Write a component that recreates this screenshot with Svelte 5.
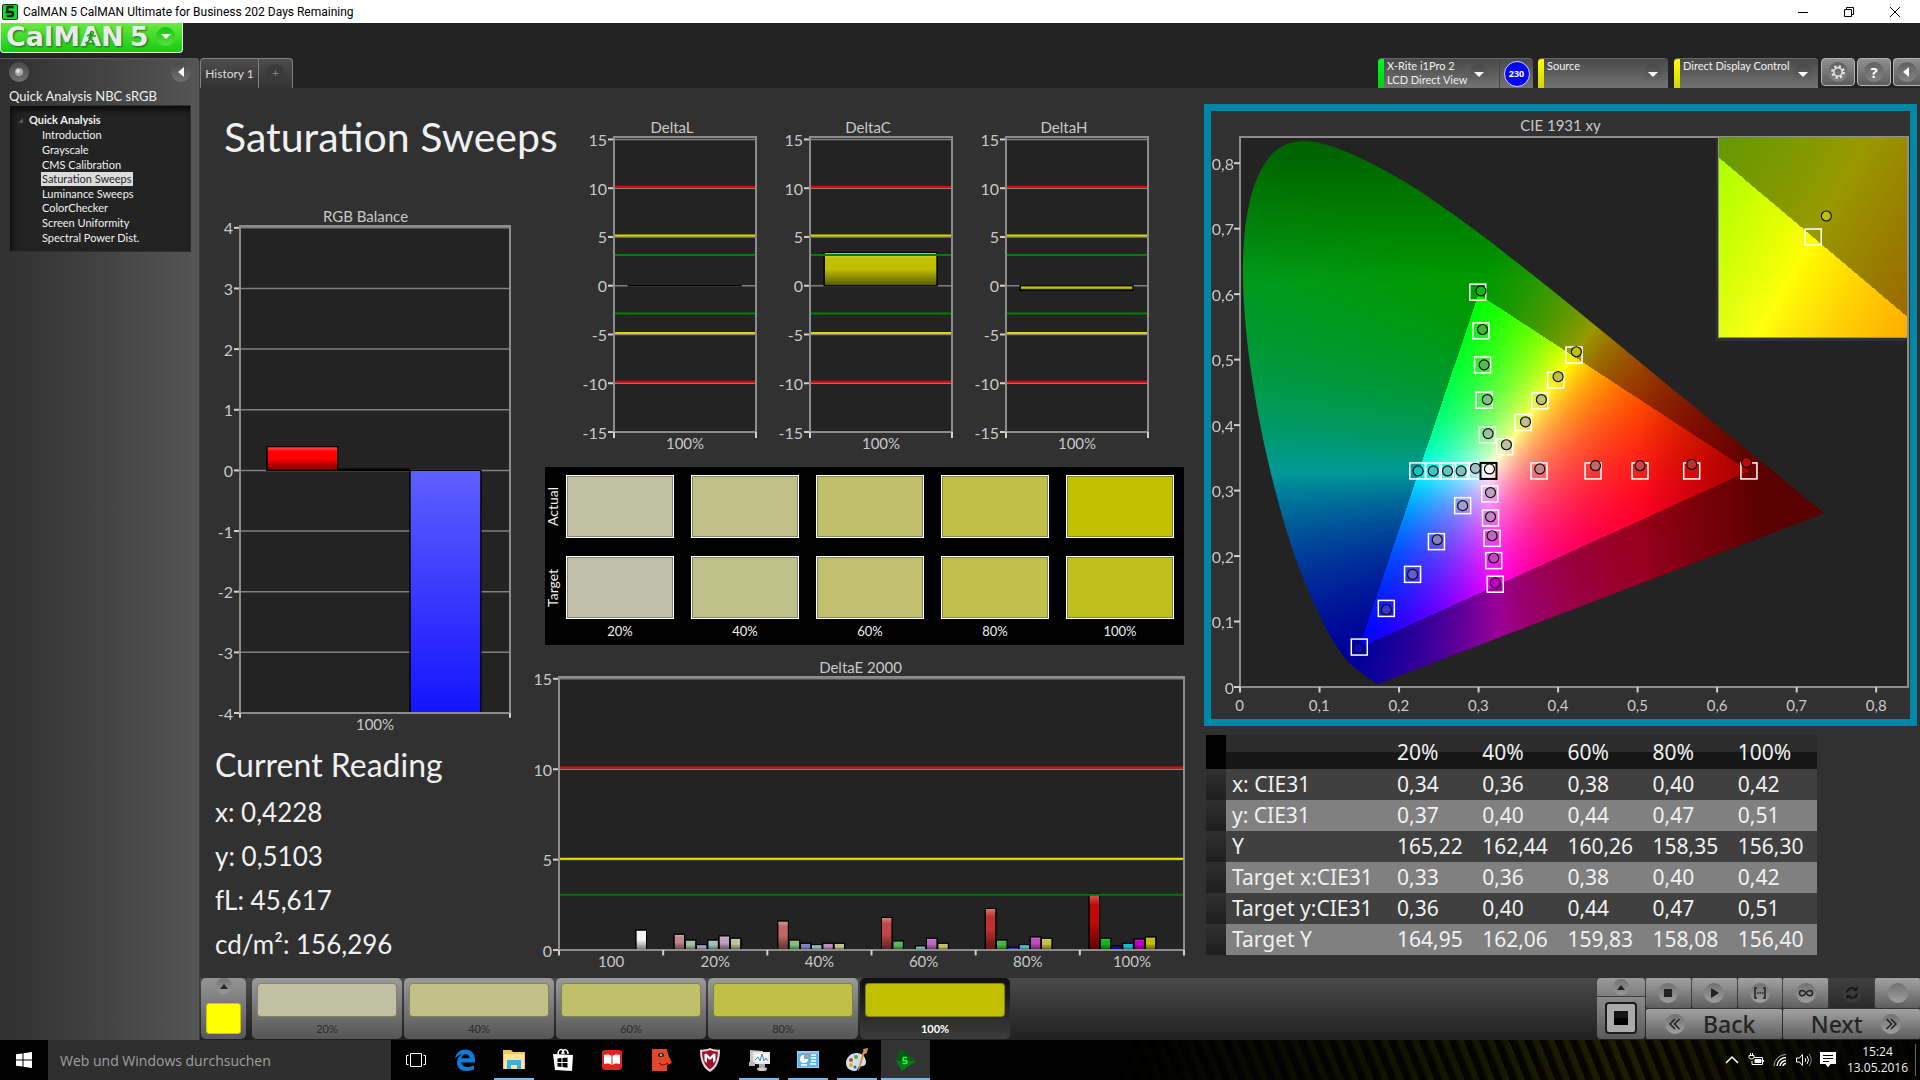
<script>
  import { onMount } from 'svelte';

  const tree = ['Introduction', 'Grayscale', 'CMS Calibration', 'Saturation Sweeps', 'Luminance Sweeps', 'ColorChecker', 'Screen Uniformity', 'Spectral Power Dist.'];

  const palette = {
    red: ['#c08888', '#c06868', '#c04848', '#c03030', '#c00808'],
    green: ['#a0c0a0', '#80c080', '#58b858', '#40b840', '#10b810'],
    blue: ['#a0a0c8', '#8080c8', '#6060c8', '#3838c8', '#0808c8'],
    cyan: ['#a0c0c0', '#80c0c0', '#70c0c0', '#40c0c8', '#10c0c8'],
    magenta: ['#c0a0c0', '#c088c0', '#c068c0', '#c048c0', '#c000c0'],
    yellow: ['#c0c0a4', '#c0c088', '#c0c06c', '#c0c048', '#c0c000']
  };
  const levels = ['20%', '40%', '60%', '80%', '100%'];
  const hues = ['red', 'green', 'blue', 'cyan', 'magenta', 'yellow'];

  // Limits of the delta charts: value and line colour
  const limits = [[10, '#f00000'], [5, '#d8d800'], [3, '#008000'], [-3, '#008000'], [-5, '#d8d800'], [-10, '#f00000']];
  const limitShift = 0.15;
  const deltaTop = 15.25;

  const deltaTicks = [15, 10, 5, 0, -5, -10, -15];
  const deltaCharts = [
    { title: 'DeltaL', value: 0.02 },
    { title: 'DeltaC', value: 3.4 },
    { title: 'DeltaH', value: -0.45 }
  ];
  const rgbTicks = [4, 3, 2, 1, 0, -1, -2, -3, -4];
  const rgbBars = [
    { x: 10, value: 0.39, color: '#ff0000' },
    { x: 36.5, value: 0.02, color: '#00ff00' },
    { x: 63, value: -4, color: '#1414ff' }
  ];

  const errors = [
    [0.87, 0.55, 0.3, 0.55, 0.78, 0.65],
    [1.6, 0.55, 0.37, 0.3, 0.37, 0.37],
    [1.8, 0.5, 0, 0.23, 0.65, 0.37],
    [2.3, 0.55, 0.15, 0.3, 0.72, 0.65],
    [3.1, 0.65, 0.22, 0.37, 0.6, 0.72]
  ];
  const errorBars = [{ x: 12.3, value: 1.1, color: '#f4f4f4' }];
  errors.forEach((row, i) =>
    row.forEach((value, k) => {
      if (value) errorBars.push({ x: 18.4 + i * 16.6 + k * 1.8, value, color: palette[hues[k]][i] });
    })
  );
  const errorLimits = [[10.1, '#f00000'], [5.05, '#e0e000'], [3.05, '#007800']];

  const swatchActual = ['#c0c0a4', '#c0c088', '#c0c06c', '#c0c048', '#c0c000'];
  const swatchTarget = ['#c0c0a8', '#c0c08a', '#c0c06e', '#c0c04c', '#c0c01c'];

  const readings = ['x: 0,4228', 'y: 0,5103', 'fL: 45,617', 'cd/m²: 156,296'];

  const rows = [
    ['x: CIE31', '0,34', '0,36', '0,38', '0,40', '0,42'],
    ['y: CIE31', '0,37', '0,40', '0,44', '0,47', '0,51'],
    ['Y', '165,22', '162,44', '160,26', '158,35', '156,30'],
    ['Target x:CIE31', '0,33', '0,36', '0,38', '0,40', '0,42'],
    ['Target y:CIE31', '0,36', '0,40', '0,44', '0,47', '0,51'],
    ['Target Y', '164,95', '162,06', '159,83', '158,08', '156,40']
  ];

  // Chromaticities per hue, 20% to 100%: [target x, target y, measured x, measured y]
  const points = {
    green: [[.311, .385, .312, .387], [.307, .438, .311, .439], [.305, .492, .307, .492], [.303, .544, .305, .546], [.299, .603, .303, .605]],
    yellow: [[.333, .367, .335, .37], [.356, .404, .359, .405], [.377, .437, .379, .439], [.397, .469, .4, .474], [.42, .507, .423, .512]],
    red: [[.376, .33, .377, .333], [.444, .33, .447, .338], [.503, .33, .503, .338], [.568, .33, .568, .34], [.64, .33, .637, .343]],
    cyan: [[.296, .33, .296, .334], [.278, .33, .278, .33], [.261, .33, .261, .33], [.243, .33, .243, .33], [.2236, .33, .224, .33]],
    magenta: [[.314, .295, .315, .297], [.315, .258, .315, .26], [.317, .227, .317, .231], [.319, .193, .319, .197], [.321, .157, .321, .159]],
    blue: [[.28, .277, .28, .277], [.247, .222, .248, .225], [.217, .172, .217, .172], [.184, .12, .184, .118], [.15, .061, .149, .059]]
  };
  const marks = Object.entries(points).flatMap(([hue, list]) => list.map((p, i) => ({ p, color: palette[hue][i] })));
  const span = 0.84;
  const px = (x) => `${(x / span) * 100}%`;
  const py = (y) => `${(1 - y / span) * 100}%`;
  const cieTicks = [0, 0.1, 0.2, 0.3, 0.4, 0.5, 0.6, 0.7, 0.8];
  const comma = (v) => String(v).replace('.', ',');

  const locus = [[.1741, .005], [.1714, .0051], [.1644, .0109], [.1566, .0177], [.144, .0297], [.1355, .0399], [.1241, .0578], [.1096, .0868], [.0913, .1327], [.0687, .2007], [.0454, .295], [.0235, .4127], [.0082, .5384], [.0039, .6548], [.0139, .7502], [.0389, .812], [.0743, .8338], [.1142, .8262], [.1547, .8059], [.1929, .7816], [.2296, .7543], [.3016, .6923], [.3731, .6245], [.4441, .5547], [.5125, .4866], [.5752, .4242], [.627, .3725], [.6658, .334], [.6915, .3083], [.719, .2809], [.7347, .2653]];

  let mainCanvas;
  let insetCanvas;

  function colorAt(x, y) {
    const X = x / y, Z = (1 - x - y) / y;
    const lin = [
      3.2406 * X - 1.5372 - 0.4986 * Z,
      -0.9689 * X + 1.8758 + 0.0415 * Z,
      0.0557 * X - 0.204 + 1.057 * Z
    ];
    const inside = Math.min(...lin) >= 0;
    const max = Math.max(...lin);
    let f = inside ? 1 : 0.6;
    if (x > 0.5) f *= 1 - 0.42 * Math.min(1, (x - 0.5) / 0.16);
    if (y > 0.62) f *= 1 - 0.35 * Math.min(1, (y - 0.62) / 0.2);
    return lin.map((c) => 255 * f * Math.pow(Math.max(0, c) / max, 1.15));
  }

  function paint(canvas, x0, y0, w, h) {
    const ctx = canvas.getContext('2d');
    const img = ctx.createImageData(canvas.width, canvas.height);
    for (let j = 0; j < canvas.height; j++)
      for (let i = 0; i < canvas.width; i++) {
        const x = x0 + ((i + 0.5) / canvas.width) * w;
        const y = y0 + h - ((j + 0.5) / canvas.height) * h;
        const [r, g, b] = colorAt(x, y);
        const k = (j * canvas.width + i) * 4;
        img.data[k] = r;
        img.data[k + 1] = g;
        img.data[k + 2] = b;
        img.data[k + 3] = 255;
      }
    ctx.putImageData(img, 0, 0);
    return ctx;
  }

  onMount(() => {
    const ctx = paint(mainCanvas, 0, 0, span, span);
    const path = locus.map(([x, y]) => [(x / span) * mainCanvas.width, (1 - y / span) * mainCanvas.height]);
    const last = path.length - 1;
    ctx.globalCompositeOperation = 'destination-in';
    ctx.beginPath();
    ctx.moveTo(...path[0]);
    // Catmull-Rom spline through the spectral locus
    for (let i = 0; i < last; i++) {
      const a = path[Math.max(i - 1, 0)];
      const b = path[i];
      const c = path[i + 1];
      const d = path[Math.min(i + 2, last)];
      ctx.bezierCurveTo(b[0] + (c[0] - a[0]) / 6, b[1] + (c[1] - a[1]) / 6, c[0] - (d[0] - b[0]) / 6, c[1] - (d[1] - b[1]) / 6, c[0], c[1]);
    }
    ctx.closePath();
    ctx.fill();
    paint(insetCanvas, 0.3943, 0.4803, 0.05, 0.05);
  });
</script>

{#snippet yAxis(ticks, lo, hi)}
  {#each ticks as t}
    {@const y = `${((hi - t) / (hi - lo)) * 100}%`}
    <line x1="0" x2="100%" y1={y} y2={y} class="grid" />
    <line x1="-6" x2="0" y1={y} y2={y} class="tick" />
    <text x="-7" y={y} class="ylab">{t}</text>
  {/each}
{/snippet}

{#snippet bar(b, w, lo, hi)}
  {@const top = ((hi - Math.max(b.value, 0)) / (hi - lo)) * 100}
  {@const h = (Math.abs(b.value) / (hi - lo)) * 100}
  <rect x="{b.x}%" y="{top}%" width="{w}%" height="{h}%" fill={b.color} stroke="#000" />
  <rect x="{b.x}%" y="{top}%" width="{w}%" height="{h}%" fill={b.value < -1 ? 'url(#fall)' : 'url(#gloss)'} stroke="#000" />
{/snippet}

<div class="desktop">
  <header class="titlebar">
    <svg width="16" height="16" viewBox="0 0 16 16"><rect width="16" height="16" rx="2" fill="#083808" /><rect x="1" y="1" width="14" height="14" rx="1" fill="#12d830" /><path d="M11.5 3H5.5L5 8h4.500q1.500 0 1.500 2t-2 2H4.500" fill="none" stroke="#021" stroke-width="2.400" /></svg>
    <span class="caption">CalMAN 5 CalMAN Ultimate for Business 202 Days Remaining</span>
    <div class="winbtns">
      <button aria-label="Minimize"><svg width="10" height="10"><path d="M0 5.500h10" stroke="#000" /></svg></button>
      <button aria-label="Restore"><svg width="10" height="10" fill="none" stroke="#000"><path d="M.5 2.500h7v7h-7zM2.500 2.500v-2h7v7h-2" /></svg></button>
      <button aria-label="Close"><svg width="10" height="10" stroke="#000"><path d="M0 0l10 10M10 0L0 10" /></svg></button>
    </div>
  </header>

  <div class="shell">
    <div class="left">
      <button class="logo">
        <span class="brand">CalM<span class="a">A<svg width="14" height="16" viewBox="0 0 14 16"><path d="M8 1.500a1.500 1.500 0 1 0 .1 0M3 6l4-2 2 2 3 0M7 5L6 9l3 2v4M6 9l-2 3-3 1" fill="none" stroke="#1c9c1c" stroke-width="1.600" /></svg></span>N</span><span class="brand">5</span>
        <span class="logo-drop"><svg width="10" height="5"><path d="M0 0h10L5 5z" fill="#fff" /></svg></span>
      </button>
      <aside class="sidebar">
        <div class="side-top">
          <button class="round" aria-label="Pin"><svg width="20" height="20"><circle cx="10" cy="10" r="4" fill="#a8a8a8" /><circle cx="9" cy="9" r="2" fill="#ddd" /></svg></button>
          <button class="round" aria-label="Collapse"><svg width="20" height="20"><path d="M13 5v10l-6-5z" fill="#fff" /></svg></button>
        </div>
        <div class="side-title">Quick Analysis NBC sRGB</div>
        <nav class="tree">
          <div class="root"><svg width="5" height="5"><path d="M5 0v5H0z" fill="#555" /></svg>Quick Analysis</div>
          <ul>
            {#each tree as item}
              <li><a href="#page" class:current={item === 'Saturation Sweeps'}>{item}</a></li>
            {/each}
          </ul>
        </nav>
      </aside>
    </div>

    <div class="right">
      <div class="toolbar">
        <button class="tab">History 1</button>
        <button class="tab plus" aria-label="New history"><span>+</span></button>
        <div class="spacer"></div>
        <div class="device meter">
          <i class="stripe green"></i>
          <button class="device-btn"><span>X-Rite i1Pro 2<br />LCD Direct View</span><span class="drop"><svg width="10" height="5"><path d="M0 0h10L5 5z" fill="#fff" /></svg></span></button>
          <div class="badge-cell"><span class="badge">230</span></div>
        </div>
        <div class="device source">
          <i class="stripe"></i>
          <button class="device-btn"><span>Source</span><span class="drop"><svg width="10" height="5"><path d="M0 0h10L5 5z" fill="#fff" /></svg></span></button>
        </div>
        <div class="device display">
          <i class="stripe"></i>
          <button class="device-btn"><span>Direct Display Control</span><span class="drop"><svg width="10" height="5"><path d="M0 0h10L5 5z" fill="#fff" /></svg></span></button>
        </div>
        <div class="tools">
          <button class="tool" aria-label="Settings"><span><svg width="16" height="16" viewBox="0 0 16 16"><circle cx="8" cy="8" r="5.800" fill="none" stroke="#e4e4e4" stroke-width="2.200" stroke-dasharray="2.300 2.255" /><circle cx="8" cy="8" r="4.200" fill="none" stroke="#e4e4e4" stroke-width="1.600" /></svg></span></button>
          <button class="tool" aria-label="Help"><span>?</span></button>
          <button class="tool cut" aria-label="Collapse toolbar"><span><svg width="16" height="16"><path d="M10 3v10L4 8z" fill="#fff" /></svg></span></button>
        </div>
      </div>

      <main class="page" id="page">
        <section class="col-a">
          <h1>Saturation Sweeps</h1>
          <div class="chart rgb">
            <h3>RGB Balance</h3>
            <svg class="plot">
              <defs>
                <linearGradient id="gloss" x1="0" x2="0" y1="0" y2="1">
                  <stop offset="0" stop-color="#fff" stop-opacity=".35" />
                  <stop offset=".2" stop-color="#fff" stop-opacity="0" />
                  <stop offset=".5" stop-opacity="0" />
                  <stop offset="1" stop-opacity=".55" />
                </linearGradient>
                <linearGradient id="fall" x1="0" x2="0" y1="0" y2="1">
                  <stop offset="0" stop-color="#fff" stop-opacity=".32" />
                  <stop offset="1" stop-color="#fff" stop-opacity="0" />
                </linearGradient>
              </defs>
              <rect width="100%" height="100%" class="face" />
              {@render yAxis(rgbTicks, -4, 4.03)}
              {#each rgbBars as b}{@render bar(b, 26.2, -4, 4.03)}{/each}
              <rect width="100%" height="100%" class="frame" />
              <line x1="0" x2="0" y1="100%" y2="101%" class="tick" />
              <line x1="100%" x2="100%" y1="100%" y2="101%" class="tick" />
            </svg>
            <div class="xlabels"><span>100%</span></div>
          </div>
          <h2>Current Reading</h2>
          {#each readings as r}<p class="reading">{r}</p>{/each}
        </section>

        <section class="col-b">
          <div class="deltas">
            {#each deltaCharts as c}
              <div class="chart delta">
                <h3>{c.title}</h3>
                <svg class="plot">
                  <rect width="100%" height="100%" class="face" />
                  {@render yAxis(deltaTicks, -15, deltaTop)}
                  {@render bar({ x: 10, value: c.value, color: '#c0c000' }, 79.5, -15, deltaTop)}
                  {#each limits as [v, color]}
                    {@const y = `${((deltaTop - v - limitShift) / (deltaTop + 15)) * 100}%`}
                    <line x1="0" x2="100%" y1={y} y2={y} stroke={color} stroke-width="2" />
                  {/each}
                  <rect width="100%" height="100%" class="frame" />
                  <line x1="0" x2="0" y1="100%" y2="102%" class="tick" />
                  <line x1="100%" x2="100%" y1="100%" y2="102%" class="tick" />
                </svg>
                <div class="xlabels"><span>100%</span></div>
              </div>
            {/each}
          </div>

          <div class="swatches">
            <span class="side">Actual</span>
            {#each swatchActual as c}<div class="swatch" style:background={c}></div>{/each}
            <span class="side">Target</span>
            {#each swatchTarget as c}<div class="swatch" style:background={c}></div>{/each}
            <span></span>
            {#each levels as l}<span class="pct">{l}</span>{/each}
          </div>

          <div class="chart errors">
            <h3>DeltaE 2000</h3>
            <svg class="plot">
              <rect width="100%" height="100%" class="face" />
              {@render yAxis([15, 10, 5, 0], 0, 15.1)}
              {#each errorBars as b}{@render bar(b, 1.7, 0, 15.1)}{/each}
              {#each errorLimits as [v, color]}
                {@const y = `${((15.1 - v) / 15.1) * 100}%`}
                <line x1="0" x2="100%" y1={y} y2={y} stroke={color} stroke-width="2" />
              {/each}
              <rect width="100%" height="100%" class="frame" />
              {#each [0, 1, 2, 3, 4, 5, 6] as i}
                <line x1="{(i / 6) * 100}%" x2="{(i / 6) * 100}%" y1="100%" y2="102%" class="tick" />
              {/each}
            </svg>
            <div class="xlabels">{#each ['100', ...levels] as l}<span>{l}</span>{/each}</div>
          </div>
        </section>

        <section class="col-c">
          <div class="cie">
            <h3>CIE 1931 xy</h3>
            <div class="cie-plot">
              <canvas bind:this={mainCanvas} width="668" height="550"></canvas>
              <svg class="plot">
                <rect width="100%" height="100%" class="frame" />
                {#each cieTicks as t}
                  <line x1="-6" x2="0" y1={py(t)} y2={py(t)} class="tick" />
                  <text x="-6" y={py(t)} class="ylab">{comma(t)}</text>
                  <line x1={px(t)} x2={px(t)} y1="100%" y2="101%" class="tick" />
                {/each}
                {#each marks as m}
                  <svg x={px(m.p[0])} y={py(m.p[1])} class="mark"><rect x="-8" y="-8" width="16" height="16" fill={m.color} fill-opacity=".15" stroke="#fff" stroke-width="1.500" /></svg>
                {/each}
                <svg x={px(0.3125)} y={py(0.33)} class="mark"><rect x="-8" y="-8" width="16" height="16" fill="none" stroke="#000" stroke-width="2" /></svg>
                {#each marks as m}
                  <circle cx={px(m.p[2])} cy={py(m.p[3])} r="5" fill={m.color} stroke="#101010" stroke-width="1.200" />
                {/each}
                <circle cx={px(0.3137)} cy={py(0.333)} r="5" fill="#fff" stroke="#000" stroke-width="1.200" />
              </svg>
              <div class="inset">
                <canvas bind:this={insetCanvas} width="190" height="200"></canvas>
                <svg>
                  <svg x="50%" y="50%" class="mark"><rect x="-8" y="-8" width="16" height="16" fill="none" stroke="#fff" stroke-width="1.500" /></svg>
                  <circle cx="57%" cy="39.500%" r="5" fill="#c0c000" stroke="#101010" stroke-width="1.200" />
                </svg>
              </div>
            </div>
            <div class="cie-x">{#each cieTicks as t}<span>{comma(t)}</span>{/each}</div>
          </div>

          <table>
            <thead>
              <tr><th class="grip"></th><th></th>{#each levels as l}<th>{l}</th>{/each}</tr>
            </thead>
            <tbody>
              {#each rows as row}
                <tr><td class="grip"></td>{#each row as cell}<td>{cell}</td>{/each}</tr>
              {/each}
            </tbody>
          </table>
        </section>
      </main>

      <footer class="strip">
        <button class="current-color" aria-label="Pattern colour">
          <span class="mini"><svg width="10" height="5"><path d="M1 5h8L5 0z" fill="#222" /></svg></span>
          <span class="fill"></span>
        </button>
        {#each levels as l, i}
          <button class="step" class:active={i === 4}><span class="chip" style:background={swatchActual[i]}></span>{l}</button>
        {/each}
        <div class="spacer"></div>
        <div class="pattern">
          <button class="pattern-up" aria-label="Expand"><span class="mini"><svg width="10" height="5"><path d="M1 5h8L5 0z" fill="#222" /></svg></span></button>
          <button class="pattern-box" aria-label="Pattern window"><span><i></i></span></button>
        </div>
        <div class="controls">
          <button class="ctl" aria-label="Stop"><span class="disc"><svg width="20" height="20"><path d="M6 6h8v8H6z" fill="#222" /></svg></span></button>
          <button class="ctl" aria-label="Read"><span class="disc"><svg width="20" height="20"><path d="M7 5v10l8-5z" fill="#222" /></svg></span></button>
          <button class="ctl" aria-label="Read series"><span class="disc"><svg width="20" height="20" fill="none" stroke="#222" stroke-width="1.500"><path d="M7 5H5v10h2M13 5h2v10h-2M7 10h1.500M9.500 10h1.500M12 10h1.500" /></svg></span></button>
          <button class="ctl" aria-label="Read continuously"><span class="disc"><svg width="20" height="20" fill="none" stroke="#222" stroke-width="1.500"><path d="M10 10C8 6.500 3.500 6.500 3.500 10s4.500 3.500 6.500 0 6.500-3.500 6.500 0-4.500 3.500-6.500 0z" /></svg></span></button>
          <button class="ctl dark" aria-label="Refresh"><span class="disc"><svg width="20" height="20" fill="none" stroke="#161616" stroke-width="2"><path d="M5 9.500a5 5 0 0 1 8.500-3M15 10.500a5 5 0 0 1-8.500 3" /><path d="M15.500 3.500v4.500h-4.500zM4.500 16.500V12H9z" fill="#161616" stroke="none" /></svg></span></button>
          <button class="ctl" aria-label="Idle"><span class="disc"></span></button>
          <button class="ctl wide back"><span class="disc"><svg width="20" height="20" fill="none" stroke="#222" stroke-width="1.500"><path d="M10 5l-5 5 5 5M14.500 5l-5 5 5 5" /></svg></span>Back</button>
          <button class="ctl wide next">Next<span class="disc"><svg width="20" height="20" fill="none" stroke="#222" stroke-width="1.500"><path d="M5.500 5l5 5-5 5M10 5l5 5-5 5" /></svg></span></button>
        </div>
      </footer>
    </div>
  </div>

  <footer class="taskbar">
    <button class="start" aria-label="Start"><svg width="16" height="16" fill="#fff"><path d="M0 2.300L6.500 1.400v6.200H0zM7.500 1.200L16 0v7.600H7.500zM0 8.400h6.500v6.200L0 13.700zM7.500 8.400H16V16l-8.500-1.200z" /></svg></button>
    <input class="search" placeholder="Web und Windows durchsuchen" aria-label="Web und Windows durchsuchen" />
    <button class="app" aria-label="Task view"><svg width="22" height="16" fill="none" stroke="#fff"><path d="M5.500 1.500h11v13h-11zM3.500 3.500h-2v9h2M18.500 3.500h2v9h-2" /></svg></button>
    <button class="app" aria-label="Edge"><svg width="24" height="24" viewBox="0 0 24 24"><path d="M2 11C3 4.500 7.500 1.500 12.500 1.500c6 0 9.500 4.500 9.500 10.500v2.500H8.500c.3 3.200 3 4.500 6 4.500 2.500 0 4.500-.7 6.500-1.800v4c-2 1.200-4.500 1.800-7.500 1.800C7.500 23 4 19.500 4 14.500c0-4 2.200-7 5.500-8.500C6 6.500 3.500 8.500 2 11zm6.600-.7h8c0-2.600-1.500-4-3.800-4s-4 1.600-4.200 4z" fill="#0b7bdc" /></svg></button>
    <button class="app open" aria-label="Explorer"><svg width="24" height="24" viewBox="0 0 24 24"><path d="M1 2h8l2 2h12v17H1z" fill="#f0c75a" /><path d="M2 6h20v15H2z" fill="#ffe591" /><path d="M5 12h14v9h-4v-4H9v4H5z" fill="#2fb3e8" /></svg></button>
    <button class="app" aria-label="Store"><svg width="24" height="24" viewBox="0 0 24 24"><path d="M7 7c0-7 5-7 6-1M11 6c1-6 6-5 6 0" fill="none" stroke="#fff" stroke-width="1.500" /><path d="M2 6l20 1-1 16-17-1z" fill="#fff" /><path d="M6.500 10.500l4-.5v4h-4zM11.500 10l5-.5V14h-5zM6.500 15h4v4l-4-.5zM11.500 15h5v4.700l-5-.6z" fill="#000" /></svg></button>
    <button class="app" aria-label="Reader"><svg width="22" height="22" viewBox="0 0 22 22"><rect x="1" y="1" width="20" height="20" rx="3" fill="#e0241f" /><path d="M3 6c3-1 6-.5 8 1 2-1.500 5-2 8-1v9c-3-1-6-.5-8 1-2-1.500-5-2-8-1z" fill="#fff" /><path d="M11 7v9" stroke="#e0241f" /></svg></button>
    <button class="app" aria-label="Face"><svg width="22" height="24" viewBox="0 0 22 24"><path d="M2 1h15l1 5 4 9-5 2v6H2z" fill="#e2452b" /><ellipse cx="11" cy="7" rx="3" ry="2" fill="#2b2b2b" /><circle cx="11" cy="7" r="1" fill="#d0d0d0" /><path d="M9 15c3 3 6 2 9 0" fill="none" stroke="#501008" /></svg></button>
    <button class="app" aria-label="Antivirus"><svg width="22" height="24" viewBox="0 0 22 24"><path d="M11 0c3 1.500 7 2 10 1.500C21 13 18 20 11 24 4 20 1 13 1 1.500 4 2 8 1.500 11 0z" fill="#ddd" /><path d="M11 2c3 1.300 5 1.500 8 1.500-.3 9-3 14.500-8 18-5-3.500-7.700-9-8-18 3 0 5-.2 8-1.500z" fill="#a30f2d" /><path d="M5.500 13V6l2-.5L11 9l3.500-3.500 2 .5v7l-2.500 2V9.500L11 12 8 9.500V15z" fill="#fff" /></svg></button>
    <button class="app open" aria-label="Monitor"><svg width="24" height="24" viewBox="0 0 24 24"><path d="M3 2l13 1v14l-13-2z" fill="#c8c8c8" /><path d="M6 4h17v12H6z" fill="#e8e8e8" /><path d="M8 6h13v8H8z" fill="#f8fcff" /><path d="M8 12l3-3 2 4 2-7 2 7 2-3 2 3" fill="none" stroke="#3a87b8" /><path d="M12 16h6v3h-6z" fill="#aaa" /><ellipse cx="15" cy="21" rx="5" ry="2" fill="#ccc" /><path d="M2 14h6v4H2z" fill="#b8b8b8" /></svg></button>
    <button class="app open" aria-label="Control panel"><svg width="24" height="20" viewBox="0 0 24 20"><path d="M1 1h22v17H1z" fill="#8fd0f4" /><path d="M2 3h20v14H2z" fill="#58b6ea" /><path d="M8 5a4 4 0 1 0 4 4H8z" fill="#fff" /><path d="M9.500 4a4 4 0 0 1 3.500 3.500H9.500z" fill="#f09030" /><path d="M15 5h5M15 8h5M15 11h5M5 15h6M14 14h6" stroke="#fff" stroke-width="1.500" /></svg></button>
    <button class="app open" aria-label="Paint"><svg width="24" height="24" viewBox="0 0 24 24"><path d="M12 5C5 5 1 10 1 15s4 8 9 8c3 0 2-3 4-4s7 0 7-5-4-9-9-9z" fill="#c9e2f3" /><circle cx="6" cy="12" r="2" fill="#d84030" /><circle cx="11" cy="9" r="2" fill="#58a838" /><circle cx="6" cy="17" r="2" fill="#e8b020" /><circle cx="10" cy="19" r="1.500" fill="#3858c0" /><path d="M20 4l-5 16-2 3 .5-4L18 3z" fill="#e88a30" /><path d="M18 1l5-1-1 5-3 1z" fill="#c89858" /></svg></button>
    <button class="app open active" aria-label="CalMAN"><svg width="24" height="24" viewBox="0 0 24 24"><path d="M6 1l16 12L8 23 2 13z" fill="#0a7a18" /><path d="M6 1l16 12-20 0z" fill="#075c10" /><path d="M13 9.500H9.500L9 12.500h2.500q1.500 0 1.500 1.500t-1.500 1.500H8.500" fill="none" stroke="#20ff40" stroke-width="1.600" /></svg></button>
    <div class="tray">
      <button aria-label="Show hidden icons"><svg width="14" height="10" fill="none" stroke="#fff" stroke-width="1.500"><path d="M1 8l6-6 6 6" /></svg></button>
      <button aria-label="Battery"><svg width="16" height="14" fill="none" stroke="#fff"><path d="M6 4.500h8.500v7H4V8" /><path d="M7 6.500h6v3H7z" fill="#fff" /><path d="M1 2.500h5v2q0 1.500-2.500 1.500T1 4.500zM2.500 2V0M4.500 2V0M15.500 7v2" /></svg></button>
      <button aria-label="Network"><svg width="14" height="14" fill="none" stroke="#fff"><path d="M1 13A12 12 0 0 1 13 1.500" stroke="#aaa" /><path d="M4 13a9 9 0 0 1 9-8.500M7 13a6 6 0 0 1 6-5.500M10 13a3 3 0 0 1 3-2.500" stroke-width="1.500" /></svg></button>
      <button aria-label="Volume"><svg width="16" height="14" fill="none" stroke="#fff"><path d="M.5 5h3l3-3.500v11L3.500 9h-3zM9 5q1.500 2 0 4M11 3q3 4 0 8" /><path d="M13 1q4.500 6 0 12" stroke="#888" /></svg></button>
      <button aria-label="Notifications"><svg width="16" height="16"><path d="M0 0h16v12h-5.500L8 15.500 5.500 12H0z" fill="#fff" /><path d="M3 3.500h10M3 6.500h10M3 9.500h6" stroke="#000" /></svg></button>
      <div class="clock"><span>15:24</span><span>13.05.2016</span></div>
    </div>
  </footer>
</div>

<style>
  :global(body) { margin: 0; background: #232323; }
  * { box-sizing: border-box; }
  button { border: 0; padding: 0; margin: 0; background: none; font: inherit; color: inherit; display: flex; align-items: center; justify-content: center; }
  h1, h2, h3, p, ul { margin: 0; padding: 0; font-weight: 400; }
  svg { display: block; flex: none; }

  .desktop { min-height: 100vh; display: flex; flex-direction: column; font-family: Lato, 'Liberation Sans', sans-serif; color: #f0f0f0; background: #232323; overflow: hidden; }

  .titlebar { height: 23px; background: #fff; color: #000; display: flex; align-items: center; gap: 5px; padding-left: 2px; font-family: Roboto, 'Noto Sans', sans-serif; font-size: 12px; }
  .caption { flex: 1; }
  .winbtns { display: flex; margin-right: 2px; }
  .winbtns button { width: 46px; height: 22px; }

  .shell { flex: 1; display: flex; }
  .left { width: 200px; flex: none; display: flex; flex-direction: column; }
  .right { flex: 1; min-width: 0; display: flex; flex-direction: column; }
  .spacer { flex: 1; }

  .logo { width: 183px; height: 30px; margin-bottom: 5px; padding: 0 7px 3px 5px; justify-content: flex-start; gap: 6px; background: linear-gradient(#6cea40, #12cc12); border: 1px solid #e0ffe0; border-top: 0; border-radius: 0 0 4px 4px; }
  .brand { font: 700 27px/25px 'DejaVu Sans', sans-serif; color: #e8ece8; text-shadow: 1px 1px 2px #245c24; }
  .a { position: relative; }
  .a svg { position: absolute; left: 4px; top: 9px; }
  .logo-drop { width: 19px; height: 19px; border-radius: 50%; margin-left: auto; background: linear-gradient(#12c412, #5ce040); display: flex; align-items: center; justify-content: center; }

  .sidebar { flex: 1; padding: 3px 8px 0 9px; background: linear-gradient(90deg, #303030, #555); border-top: 1px solid #5a5a5a; border-right: 1px solid #3a3a3a; border-radius: 0 4px 0 0; }
  .side-top { display: flex; justify-content: space-between; }
  .round { width: 20px; height: 20px; border-radius: 50%; background: linear-gradient(#4a4a4a, #707070); }
  .side-title { font-size: 13px; line-height: 16px; margin: 6px 0 1px; white-space: nowrap; }
  .tree { height: 147px; background: #232323; border: 1px solid #303030; box-shadow: inset 2px 4px 6px #0a0a0a; padding: 7px 0 0 8px; }
  .root { font-size: 11px; font-weight: 700; line-height: 14px; display: flex; align-items: center; gap: 6px; }
  .tree ul { list-style: none; margin: 1px 0 0 23px; height: 117px; display: grid; grid-auto-rows: 1fr; }
  .tree li { display: flex; align-items: center; }
  .tree a { color: #f0f0f0; text-decoration: none; line-height: 14px; padding: 0 1px; font-size: 11px; white-space: nowrap; }
  .tree a.current { background: #dcdcdc; color: #282828; }

  .toolbar { height: 65px; display: flex; align-items: flex-end; }
  .tab { width: 59px; height: 30px; font-size: 12px; color: #dcdcdc; background: linear-gradient(#4c4c4c, #333); border: 1px solid #808080; border-bottom: 0; border-radius: 4px 0 0 0; white-space: nowrap; }
  .tab.plus { width: 34px; border-left: 0; border-radius: 0 4px 0 0; }
  .plus span { width: 19px; height: 19px; line-height: 18px; border-radius: 50%; background: #3a3a3a; color: #888; }
  .device { height: 30px; display: flex; background: linear-gradient(#4a4a4a, #727272); border-radius: 4px 4px 0 0; overflow: hidden; margin-right: 6px; border-top: 1px solid #666; }
  .meter { width: 155px; margin-right: 5px; }
  .source { width: 130px; }
  .display { width: 144px; margin-right: 3px; }
  .stripe { width: 6px; flex: none; background: linear-gradient(#ffff00, #d4d400); }
  .stripe.green { background: linear-gradient(#00ff18, #00d010); }
  .device-btn { flex: 1; min-width: 0; justify-content: space-between; align-items: flex-start; text-align: left; font-size: 11px; line-height: 14px; padding: 0 5px 0 3px; white-space: nowrap; }
  .drop { width: 20px; height: 20px; flex: none; border-radius: 50%; margin-top: 5px; background: linear-gradient(#484848, #6c6c6c); display: flex; align-items: center; justify-content: center; }
  .badge-cell { width: 34px; flex: none; border-left: 1px solid #444; display: flex; align-items: center; justify-content: center; }
  .meter .device-btn { padding-right: 10px; }
  .badge { width: 26px; height: 26px; border-radius: 50%; background: #0000ff; border: 1px solid #d0d0ff; font: 700 9px/24px 'Open Sans', sans-serif; text-align: center; color: #fff; }
  .tools { display: flex; gap: 2px; margin-bottom: 2px; }
  .tool { width: 34px; height: 28px; border: 1px solid #b4b4b4; border-radius: 4px; background: linear-gradient(#909090, #5c5c5c); }
  .tool span { width: 20px; height: 20px; border-radius: 50%; background: linear-gradient(#606060, #848484); font: 700 15px/20px 'Open Sans', sans-serif; color: #fff; display: flex; align-items: center; justify-content: center; }
  .tool.cut { width: 27px; border-right: 0; border-radius: 4px 0 0 4px; }

  .page { flex: 1; display: grid; grid-template-columns: 337fr 667fr 713fr; padding-right: 3px; background: #313131; }
  .page section { min-width: 0; }
  h1 { font-size: 41px; line-height: 60px; margin: 19px 0 39px 24px; white-space: nowrap; }
  h2 { font-size: 32px; line-height: 50px; margin-left: 15px; white-space: nowrap; }
  h3 { font-size: 15px; line-height: 20px; color: #c8c8c8; text-align: center; }
  .reading { font-size: 26px; line-height: 44px; margin-left: 15px; white-space: nowrap; }

  .plot { width: 100%; overflow: visible; }
  .face { fill: #232323; }
  .frame { fill: none; stroke: #8c8c8c; stroke-width: 2; }
  .grid { stroke: #808080; stroke-width: 1.5; }
  .tick { stroke: #d0d0d0; stroke-width: 2; }
  .ylab { fill: #c8c8c8; font-size: 16px; text-anchor: end; dominant-baseline: central; }
  .xlabels { display: flex; height: 27px; font-size: 15px; line-height: 22px; color: #c8c8c8; text-align: center; }
  .xlabels span { flex: 1; }

  .rgb h3 { padding-right: 6px; }
  .rgb .plot { height: 487px; }
  .rgb .plot, .rgb .xlabels { width: calc(100% - 67px); margin-left: 40px; }
  .deltas { display: grid; grid-template-columns: repeat(3, 1fr); padding: 29px 22px 0 37px; }
  .col-b { padding-right: 20px; }
  .delta .plot { height: 295px; }
  .delta .plot, .delta .xlabels { width: calc(100% - 54px); margin-left: 40px; }
  .swatches { margin: 8px 0 12px 8px; padding: 8px 10px 0 0; height: 178px; background: #000; display: grid; grid-template-columns: 4px repeat(5, 1fr); column-gap: 17px; grid-template-rows: 63px 63px 20px; row-gap: 18px; }
  .swatch { border: 1px solid #fff; box-shadow: inset 0 0 0 1px rgba(80, 80, 60, 0.5); }
  .side { writing-mode: vertical-rl; transform: rotate(180deg); font-size: 14px; line-height: 16px; width: 16px; text-align: center; justify-self: start; }
  .pct { font-size: 13px; line-height: 20px; margin-top: -16px; text-align: center; }
  .errors .plot { height: 273px; }
  .errors .plot, .errors .xlabels { width: calc(100% - 22px); margin-left: 22px; }

  .cie { margin-top: 16px; border: 7px solid #0087a8; padding: 4px 2px 0 29px; }
  .cie h3 { margin-left: -27px; padding-bottom: 2px; }
  .cie-plot { position: relative; display: grid; height: 550px; background: #232323; }
  .cie-plot > canvas, .cie-plot > .plot { grid-area: 1 / 1; width: 100%; height: 550px; }
  .mark { overflow: visible; }
  .inset { position: absolute; right: 0; top: -1px; width: 28.5%; height: 202px; border: 1px solid #909090; display: grid; box-shadow: -2px 3px 0 #313131; }
  .inset canvas, .inset > svg { grid-area: 1 / 1; width: 100%; height: 200px; }
  .cie-x { display: grid; grid-template-columns: repeat(9, 1fr); width: 107.2%; margin-left: -6%; height: 32px; padding-top: 8px; font-size: 15px; line-height: 20px; color: #c8c8c8; text-align: center; }

  table { margin: 9px 0 0 2px; width: 611px; border-collapse: collapse; table-layout: fixed; font: 21px/31px 'Noto Sans', 'Open Sans', sans-serif; }
  th, td { padding: 0 0 0 6px; text-align: left; font-weight: 400; white-space: nowrap; height: 31px; }
  th { height: 34px; line-height: 34px; background: linear-gradient(#2c2c2c 50%, #161616 50%); }
  th:nth-child(2) { width: 165px; }
  tbody tr { background: #404040; }
  tbody tr:nth-child(even) { background: #808080; }
  .grip { width: 20px; background: linear-gradient(#303030, #1e1e1e); }
  th.grip { background: #000; }

  .strip { height: 62px; display: flex; align-items: flex-start; background: linear-gradient(#4a4a4a, #202020); padding-left: 1px; gap: 2px; font-size: 11px; }
  .current-color { width: 45px; height: 61px; flex-direction: column; justify-content: space-between; padding: 0 5px 5px; border-radius: 5px; background: linear-gradient(#949494, #585858); margin-right: 4px; }
  .fill { width: 35px; height: 31px; background: #ffff00; border: 1px solid #c8c800; border-radius: 3px; }
  .mini { width: 16px; height: 16px; border-radius: 50%; background: linear-gradient(#707070, #9a9a9a); display: flex; align-items: center; justify-content: center; }
  .step { width: 150px; height: 61px; flex-direction: column; justify-content: flex-start; padding: 5px 5px 0; border-radius: 5px; background: linear-gradient(#9a9a9a, #555); color: #2c2c2c; line-height: 20px; }
  .chip { width: 100%; height: 37px; border-radius: 4px; border: 1px solid rgba(60, 60, 30, 0.45); margin-bottom: 2px; }
  .step.active { background: linear-gradient(#101010, #3c3c3c); color: #fff; font-weight: 700; }
  .pattern { width: 48px; height: 61px; margin-right: -1px; display: grid; grid-template-rows: 18px 1fr; gap: 1px; }
  .pattern button { background: linear-gradient(#9a9a9a, #7e7e7e); border-radius: 4px 4px 0 0; }
  .pattern .pattern-box { background: linear-gradient(#8a8a8a, #5a5a5a); border-radius: 0 0 4px 4px; }
  .pattern-box span { width: 32px; height: 32px; border: 2px solid #1c1c1c; border-radius: 4px; background: #aaa; display: flex; align-items: center; justify-content: center; }
  .pattern-box i { width: 14px; height: 14px; background: linear-gradient(#141414 50%, #000 50%); }
  .controls { width: 274px; display: grid; grid-template-columns: repeat(6, 1fr); grid-template-rows: 30px 30px; gap: 1px; }
  .ctl { background: linear-gradient(#a2a2a2, #5e5e5e); border-radius: 2px; }
  .ctl.dark { background: linear-gradient(#404040, #2a2a2a); }
  .disc { width: 20px; height: 20px; border-radius: 50%; background: linear-gradient(#707070, #a0a0a0); }
  .dark .disc { background: #3a3a3a; }
  .ctl.wide { grid-column: span 3; gap: 18px; font: 500 23px/30px 'Noto Sans', sans-serif; color: #242424; }
  .ctl.back { padding-right: 8px; }
  .ctl.next { padding-left: 8px; }

  .taskbar { height: 40px; display: flex; background: repeating-linear-gradient(68deg, rgba(0, 0, 0, 0.8) 0 6px, transparent 9px 14px), linear-gradient(90deg, #000 57%, #141600 75%, #1d1d02 85%, #050500 97%); font-family: 'Open Sans', 'Noto Sans', sans-serif; }
  .start { width: 48px; background: #000; }
  .search { width: 343px; border: 0; background: #2f2f2f; padding: 0 12px; font: 14px 'Open Sans', sans-serif; color: #ddd; border-radius: 0; }
  .search::placeholder { color: #a0a0a0; opacity: 1; }
  .app { width: 49px; }
  .app.open { background: linear-gradient(#76b9ed, #76b9ed) center 100% / 40px 2px no-repeat; }
  .app.active { background: linear-gradient(#76b9ed, #76b9ed) center 100% / 49px 2px no-repeat, #333; }
  .tray { margin-left: auto; display: flex; align-items: center; }
  .tray button { width: 24px; height: 40px; }
  .clock { width: 76px; margin-right: 4px; border-right: 1px solid #666; display: flex; flex-direction: column; align-items: center; font-size: 12px; line-height: 16px; }
</style>
